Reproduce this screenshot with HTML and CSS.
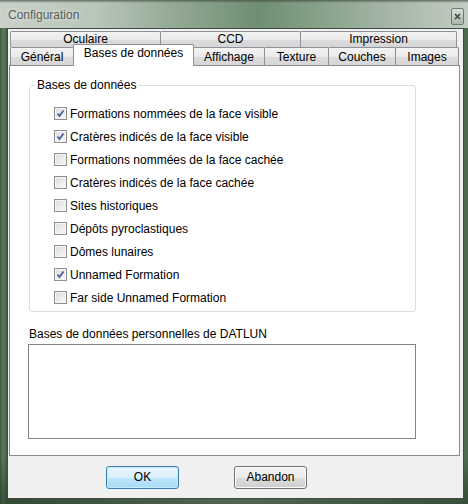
FILE: index.html
```html
<!DOCTYPE html>
<html lang="fr">
<head>
<meta charset="utf-8">
<title>Configuration</title>
<link rel="stylesheet" href="styles.css">
</head>
<body>
<div class="window">
  <div class="titlebar">
    <span class="title">Configuration</span>
    <span class="close"><svg width="7" height="7" viewBox="0 0 7 7"><path d="M1 1 L6 6 M6 1 L1 6" stroke="#3c4a3f" stroke-width="1.6"/></svg></span>
  </div>
  <div class="client">
    <div class="tabctl">
      <div class="tabrow row1">
        <div class="tab w150">Oculaire</div>
        <div class="tab w140">CCD</div>
        <div class="tab w157">Impression</div>
      </div>
      <div class="tabrow row2">
        <div class="tab w63">Général</div>
        <div class="tab w120 sel">Bases de données</div>
        <div class="tab w71">Affichage</div>
        <div class="tab w64">Texture</div>
        <div class="tab w67">Couches</div>
        <div class="tab w63">Images</div>
      </div>
      <div class="page">
        <fieldset class="group">
          <legend>Bases de données</legend>
          <div class="chk on"><span class="box"><svg width="9" height="9" viewBox="0 0 9 9"><path d="M1.5 4.5 L3.5 7 L7.5 1.5" fill="none" stroke="#4b5e9b" stroke-width="1.8"/></svg></span>Formations nommées de la face visible</div>
          <div class="chk on"><span class="box"><svg width="9" height="9" viewBox="0 0 9 9"><path d="M1.5 4.5 L3.5 7 L7.5 1.5" fill="none" stroke="#4b5e9b" stroke-width="1.8"/></svg></span>Cratères indicés de la face visible</div>
          <div class="chk"><span class="box"></span>Formations nommées de la face cachée</div>
          <div class="chk"><span class="box"></span>Cratères indicés de la face cachée</div>
          <div class="chk"><span class="box"></span>Sites historiques</div>
          <div class="chk"><span class="box"></span>Dépôts pyroclastiques</div>
          <div class="chk"><span class="box"></span>Dômes lunaires</div>
          <div class="chk on"><span class="box"><svg width="9" height="9" viewBox="0 0 9 9"><path d="M1.5 4.5 L3.5 7 L7.5 1.5" fill="none" stroke="#4b5e9b" stroke-width="1.8"/></svg></span>Unnamed Formation</div>
          <div class="chk"><span class="box"></span>Far side Unnamed Formation</div>
        </fieldset>
        <div class="perso-label">Bases de données personnelles de DATLUN</div>
        <div class="listbox"></div>
      </div>
    </div>
    <div class="buttons">
      <div class="btn default">OK</div>
      <div class="btn">Abandon</div>
    </div>
  </div>
</div>
</body>
</html>
```
FILE: styles.css
```css
html, body {
  margin: 0;
  padding: 0;
}
body {
  width: 468px;
  height: 504px;
  overflow: hidden;
  font-family: "Liberation Sans", Arial, sans-serif;
  font-size: 12px;
  color: #000;
}
.window {
  width: 468px;
  height: 504px;
  box-sizing: border-box;
  background:
    linear-gradient(180deg, rgba(40,60,40,0) 0%, rgba(40,60,40,0) 90%, rgba(30,50,30,0.5) 100%),
    linear-gradient(90deg, #3e5a42 0px, #5c7a5e 3px, #445f47 7px, #7e957f 50%, #4d6a50 100%);
  display: flex;
  flex-direction: column;
}
.titlebar {
  height: 28px;
  flex: none;
  display: flex;
  align-items: center;
  justify-content: space-between;
  padding: 2px 4px 0 8px;
  box-sizing: border-box;
  background:
    linear-gradient(180deg, rgba(60,70,60,0.7) 0px, rgba(60,70,60,0) 3px),
    linear-gradient(90deg, #c9d1c9 0%, #b9c6ba 20%, #8ea58f 40%, #6f8e72 55%, #8ba48d 70%, #a9b8aa 85%, #c2ccc2 100%);
}
.title {
  font-size: 12px;
  color: #555d56;
  text-shadow: 0 0 4px rgba(255,255,255,0.8);
}
.close {
  width: 11px;
  height: 15px;
  border: 1px solid #6f7d71;
  border-radius: 2px;
  background: linear-gradient(180deg, #d8dfd8, #a9b5aa);
  display: flex;
  align-items: center;
  justify-content: center;
  margin-top: 2px;
}
.client {
  margin: 0 4px 0 7px;
  height: 471px;
  box-sizing: border-box;
  border: 1px solid #3f4d41;
  background: #f0f0f0;
  padding-top: 2px;
}
.tabctl {
  margin: 0 3px 0 1px;
}
.tabrow {
  display: flex;
  margin-left: 1px;
}
.tab {
  box-sizing: border-box;
  flex: none;
  border: 1px solid #8e9199;
  border-bottom: none;
  border-radius: 2px 2px 0 0;
  background: linear-gradient(180deg, #f3f3f3 0%, #ebebeb 50%, #dcdcdc 51%, #d6d6d6 100%);
  text-align: center;
  margin-right: -1px;
}
.row1 .tab {
  height: 16px;
  line-height: 15px;
}
.row2 {
  height: 18px;
}
.row2 .tab {
  height: 18px;
  line-height: 18px;
}
.row2 .tab.sel {
  position: relative;
  z-index: 2;
  height: 22px;
  margin-top: -3px;
  line-height: 17px;
  background: #fff;
}
.w150 { width: 151px; }
.w140 { width: 141px; }
.w157 { width: 157px; }
.w63 { width: 64px; }
.w120 { width: 121px; }
.w71 { width: 72px; }
.w64 { width: 65px; }
.w67 { width: 68px; }
.page {
  position: relative;
  z-index: 1;
  height: 391px;
  box-sizing: border-box;
  border: 1px solid #898c95;
  background: #fff;
  padding-top: 12px;
}
.group {
  margin: 0 0 0 19px;
  width: 387px;
  box-sizing: border-box;
  border: 1px solid #d5dfe5;
  border-radius: 3px;
  padding: 10px 0 2px 0;
}
.group legend {
  margin-left: 5px;
  padding: 0 2px;
  line-height: 14px;
}
.chk {
  height: 23px;
  display: flex;
  align-items: center;
  padding-left: 24px;
}
.box {
  width: 13px;
  height: 13px;
  box-sizing: border-box;
  border: 1px solid #8f8f8f;
  background: linear-gradient(135deg, #dcdcdc, #fafafa);
  box-shadow: inset 0 0 0 1px #f4f4f4;
  margin-right: 3px;
  display: flex;
  align-items: center;
  justify-content: center;
  flex: none;
}
.perso-label {
  margin: 15px 0 0 19px;
  line-height: 14px;
}
.listbox {
  margin: 3px 0 0 18px;
  width: 388px;
  height: 95px;
  box-sizing: border-box;
  border: 1px solid #828282;
  background: #fff;
}
.buttons {
  display: flex;
  gap: 55px;
  padding: 10px 0 0 98px;
}
.btn {
  width: 73px;
  height: 23px;
  box-sizing: border-box;
  border: 1px solid #707070;
  border-radius: 3px;
  background: linear-gradient(180deg, #f2f2f2 0%, #ebebeb 50%, #dddddd 51%, #cfcfcf 100%);
  box-shadow: inset 0 0 0 1px #fcfcfc;
  text-align: center;
  line-height: 20px;
}
.btn.default {
  border-color: #3c7fb1;
  background: linear-gradient(180deg, #eaf6fd 0%, #d9f0fc 50%, #bee6fd 51%, #a7d9f5 100%);
  box-shadow: inset 0 0 0 1px #c4ecfb;
}
```
